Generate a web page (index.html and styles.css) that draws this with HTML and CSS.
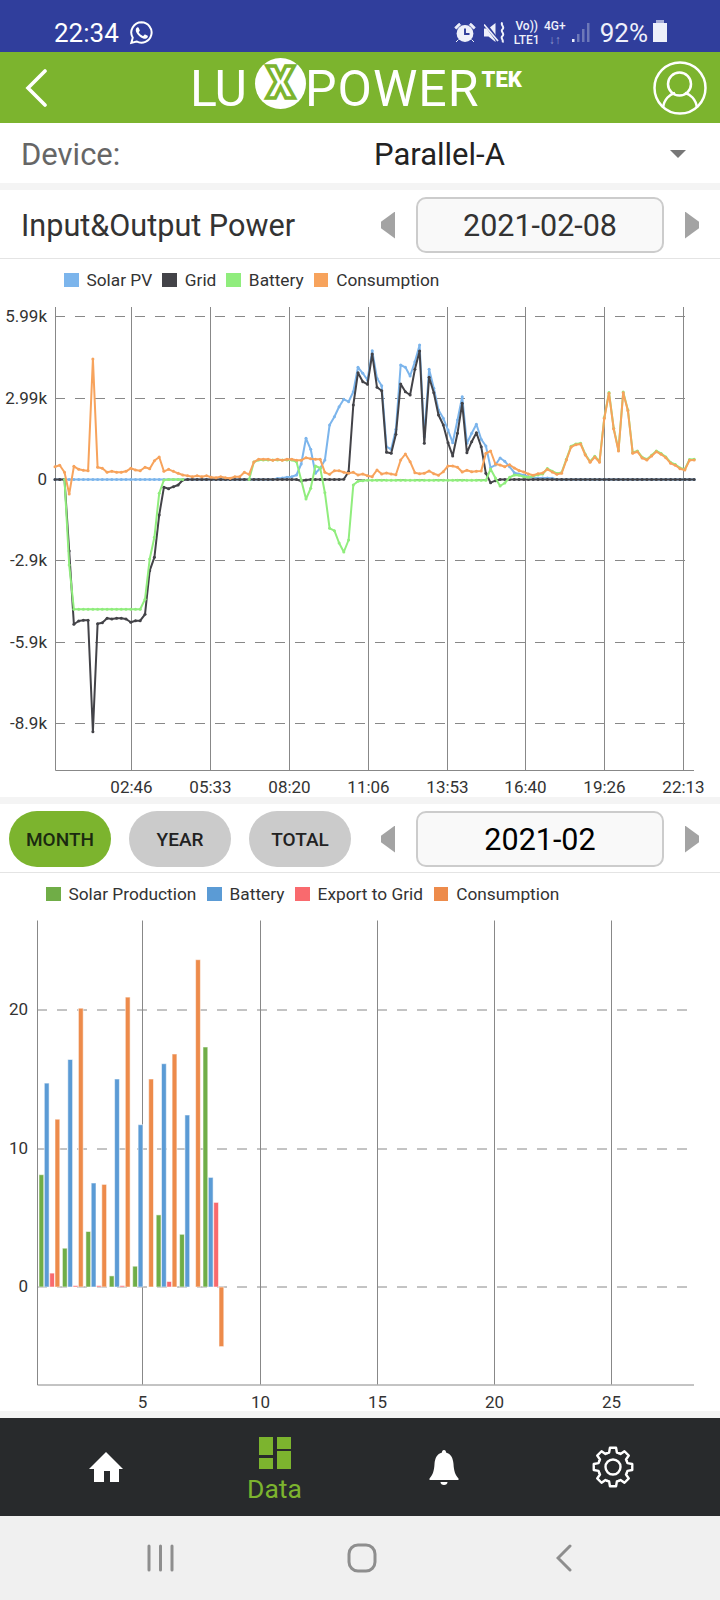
FILE: index.html
```html
<!DOCTYPE html>
<html lang="en">
<head>
    <meta charset="UTF-8">
    <meta name="viewport" content="width=device-width, initial-scale=1.0">
    <title>LuxPower Data</title>
    <link rel="stylesheet" href="styles.css">
</head>
<body>
    <div class="statusbar">
        <span class="clock">22:34</span>
        <svg class="icon-whatsapp" viewBox="0 0 24 24">
            <path d="M12 2.2a9.8 9.8 0 0 0-8.4 14.8L2.2 22l5-1.4A9.8 9.8 0 1 0 12 2.2z" fill="none" stroke="#fff" stroke-width="1.9"/>
            <path d="M8.5 7c-.3 0-.7.1-1 .5-.4.4-1 1-1 2.4s1 2.8 1.2 3c.1.2 2 3.1 4.9 4.3 2.4 1 2.9.8 3.4.7.5 0 1.7-.7 1.9-1.3.2-.7.2-1.2.2-1.3-.1-.2-.3-.2-.6-.4l-2-1c-.3-.1-.5-.1-.7.2l-.9 1.1c-.2.2-.3.2-.6.1-.3-.2-1.2-.5-2.3-1.4-.8-.8-1.4-1.7-1.6-2-.1-.3 0-.4.2-.6l.4-.5.3-.5v-.5l-.9-2.2c-.2-.6-.5-.5-.7-.5z" fill="#fff"/>
        </svg>
        <div class="status-right">
            <svg class="icon-alarm" viewBox="0 0 22 21">
                <circle cx="11" cy="11.500" r="8.400" fill="#eef0fa"/>
                <path d="M11 6.500v5.500h4.500" fill="none" stroke="#303e9c" stroke-width="1.900"/>
                <path d="M.8 5.500 5 1.300l1.600 1.500-4.200 4.200zM21.200 5.500 17 1.300l-1.600 1.500 4.200 4.200zM4.500 17.500l-2.500 2.500M17.500 17.500l2.500 2.500" fill="#eef0fa" stroke="#eef0fa"/>
            </svg>
            <svg class="icon-mute" viewBox="0 0 22 21">
                <path d="M0 6.500h4.500L11.500 1v19l-7-5.500H0z" fill="#eef0fa"/>
                <path d="M1 1.500 14 19" stroke="#303e9c" stroke-width="3.400"/>
                <path d="M0 2.500l14 16.500" stroke="#eef0fa" stroke-width="1.700"/>
                <path d="M18.500 .5c-2.800 2.200 2.800 4.300 0 6.700s2.800 4.300 0 6.700 1.700 3.700 0 6.500" fill="none" stroke="#eef0fa" stroke-width="2"/>
            </svg>
            <div class="net-stack volte"><span>Vo))</span><span>LTE1</span></div>
            <div class="net-stack g4"><span>4G+</span><span class="arrows">↓↑</span></div>
            <svg class="icon-signal" viewBox="0 0 18 20">
                <rect x="0" y="16" width="2.500" height="3" fill="#eef0fa"/>
                <rect x="5" y="11" width="2.500" height="8" fill="#6d78b8"/>
                <rect x="10" y="6" width="2.500" height="13" fill="#6d78b8"/>
                <rect x="15" y="0" width="2.500" height="19" fill="#6d78b8"/>
            </svg>
            <span class="battery-text">92%</span>
            <span class="battery"></span>
        </div>
    </div>

    <div class="topbar">
        <svg class="icon-back" viewBox="0 0 22 38">
            <path d="M20 2 3 19l17 17" fill="none" stroke="#fff" stroke-width="3.600" stroke-linecap="round"/>
        </svg>
        <div class="logo">
            <span class="logo-lu">LU</span>
            <span class="logo-x">X</span>
            <span class="logo-power">POWER</span>
            <span class="logo-tek">TEK</span>
        </div>
        <svg class="icon-profile" viewBox="0 0 54 54">
            <circle cx="27" cy="27" r="25.500" fill="none" stroke="#fff" stroke-width="2.500"/>
            <circle cx="26.500" cy="23" r="11.500" fill="none" stroke="#fff" stroke-width="2.500"/>
            <path d="M10 47c1-9 7-14 12-15M44 47c-1-9-7-14-12-15" fill="none" stroke="#fff" stroke-width="2.500"/>
        </svg>
    </div>

    <div class="device-row">
        <span class="device-label">Device:</span>
        <span class="device-name">Parallel-A</span>
        <span class="dropdown-arrow"></span>
    </div>

    <div class="panel-head power-head">
        <h2 class="panel-title">Input&amp;Output Power</h2>
        <div class="date-nav">
            <span class="tri tri-prev"></span>
            <div class="date-box">2021-02-08</div>
            <span class="tri tri-next"></span>
        </div>
    </div>

    <div class="chart-panel">
        <div class="legend legend-power">
            <span class="legend-item"><i class="swatch" style="background:#7cb5ec"></i>Solar PV</span>
            <span class="legend-item"><i class="swatch" style="background:#434348"></i>Grid</span>
            <span class="legend-item"><i class="swatch" style="background:#90ed7d"></i>Battery</span>
            <span class="legend-item"><i class="swatch" style="background:#f7a35c"></i>Consumption</span>
        </div>
        <svg id="powerChart" class="chart" viewBox="0 300 720 497"></svg>
    </div>

    <div class="panel-head range-head">
        <div class="range-tabs">
            <button class="pill active">MONTH</button>
            <button class="pill">YEAR</button>
            <button class="pill">TOTAL</button>
        </div>
        <div class="date-nav">
            <span class="tri tri-prev"></span>
            <div class="date-box month-box">2021-02</div>
            <span class="tri tri-next"></span>
        </div>
    </div>

    <div class="chart-panel">
        <div class="legend legend-energy">
            <span class="legend-item"><i class="swatch" style="background:#70ad47"></i>Solar Production</span>
            <span class="legend-item"><i class="swatch" style="background:#5b9bd5"></i>Battery</span>
            <span class="legend-item"><i class="swatch" style="background:#f96a6e"></i>Export to Grid</span>
            <span class="legend-item"><i class="swatch" style="background:#ed8b4b"></i>Consumption</span>
        </div>
        <svg id="energyChart" class="chart" viewBox="0 915 720 496"></svg>
    </div>

    <div class="tabbar">
        <div class="tab">
            <svg class="icon-home" viewBox="0 0 34 30">
                <path d="M17 0 34 17h-4v13h-9V19h-6v11H5V17H0z" fill="#fff"/>
            </svg>
        </div>
        <div class="tab tab-data">
            <svg class="icon-data" viewBox="0 0 32 32">
                <path d="M0 0h14v18H0zM18 0h14v12H18zM18 14h14v18H18zM0 21h14v11H0z" fill="#7cb42e"/>
            </svg>
            <span class="tab-label">Data</span>
        </div>
        <div class="tab">
            <svg class="icon-bell" viewBox="0 0 30 35">
                <path d="M15 0c1.500 0 2 1 2 2.500C22 4 24 8 24.500 14c.3 6 1.500 11 5 14.500V30H.5v-1.500C4 25 5.200 20 5.500 14 6 8 8 4 13 2.500 13 1 13.500 0 15 0z" fill="#fff"/>
                <path d="M11.500 32h7c0 2-1.500 3-3.500 3s-3.500-1-3.500-3z" fill="#fff"/>
            </svg>
        </div>
        <div class="tab">
            <svg class="icon-gear" viewBox="0 0 44 42">
                <g transform="translate(22 21)" fill="none" stroke="#fff" stroke-width="2.400" stroke-linecap="round" stroke-linejoin="round">
                    <circle r="7.500"/>
                    <path id="gearTooth" d="M-5.740-13.860-3.880-14.490-3.050-19.260H3.050L3.880-14.490 5.740-13.860"/>
                    <use href="#gearTooth" transform="rotate(45)"/>
                    <use href="#gearTooth" transform="rotate(90)"/>
                    <use href="#gearTooth" transform="rotate(135)"/>
                    <use href="#gearTooth" transform="rotate(180)"/>
                    <use href="#gearTooth" transform="rotate(225)"/>
                    <use href="#gearTooth" transform="rotate(270)"/>
                    <use href="#gearTooth" transform="rotate(315)"/>
                </g>
            </svg>
        </div>
    </div>

    <div class="navbar">
        <div class="nav-btn">
            <svg class="nav-recent" viewBox="0 0 27 28">
                <path d="M2 2v24M13.500 2v24M25 2v24" stroke="#8e8e8e" stroke-width="3" stroke-linecap="round"/>
            </svg>
        </div>
        <div class="nav-btn">
            <svg class="nav-home" viewBox="0 0 30 30">
                <rect x="2" y="2" width="26" height="26" rx="9" fill="none" stroke="#8e8e8e" stroke-width="3"/>
            </svg>
        </div>
        <div class="nav-btn">
            <svg class="nav-back" viewBox="0 0 16 28">
                <path d="M14 2 2 14l12 12" fill="none" stroke="#8e8e8e" stroke-width="3" stroke-linecap="round"/>
            </svg>
        </div>
    </div>

    <script src="charts.js"></script>
</body>
</html>
```

FILE: styles.css
```css
* {
    box-sizing: border-box;
}
body {
    font-family: Roboto, Arial, sans-serif;
    background-color: #f4f4f4;
    margin: 0;
    padding: 0;
    width: 720px;
    height: 1600px;
    overflow: hidden;
    color: #333;
}
svg {
    display: block;
    flex: none;
}

/* status bar */
.statusbar {
    height: 52px;
    background-color: #303e9c;
    color: #eef0fa;
    display: flex;
    align-items: center;
    padding: 13px 0 0 54px;
}
.clock {
    font-size: 26px;
    color: #fff;
}
.icon-whatsapp {
    width: 25px;
    height: 25px;
    margin-left: 10px;
}
.status-right {
    margin-left: auto;
    display: flex;
    align-items: center;
    padding-right: 53px;
}
.icon-alarm {
    width: 22px;
    height: 21px;
}
.icon-mute {
    width: 22px;
    height: 21px;
    margin-left: 8px;
}
.net-stack {
    display: flex;
    flex-direction: column;
    align-items: center;
    font-size: 12px;
    font-weight: 500;
    line-height: 14px;
}
.volte {
    margin-left: 8px;
    width: 26px;
}
.g4 {
    margin-left: 5px;
    width: 20px;
}
.arrows {
    color: #8f98cc;
}
.icon-signal {
    width: 18px;
    height: 20px;
    margin-left: 7px;
}
.battery-text {
    font-size: 26px;
    margin-left: 10px;
}
.battery {
    width: 14px;
    height: 19px;
    margin-left: 5px;
    background-color: #eef0fa;
    position: relative;
}
.battery::before {
    content: "";
    position: absolute;
    left: 3px;
    top: -3px;
    width: 8px;
    height: 3px;
    background-color: #a9afd8;
}

/* green header */
.topbar {
    height: 71px;
    background-color: #7cb42e;
    display: flex;
    align-items: center;
}
.icon-back {
    width: 22px;
    height: 38px;
    margin-left: 25px;
}
.logo {
    display: flex;
    align-items: center;
    margin-left: 143px;
    margin-top: 2px;
    color: #fff;
    font-weight: 400;
    font-size: 50px;
    line-height: 1;
}
.logo-lu {
    letter-spacing: -1px;
    width: 65px;
}
.logo-x {
    width: 51px;
    height: 51px;
    border-radius: 50%;
    background-color: #fff;
    color: #fff;
    -webkit-text-stroke: 3.500px #7cb42e;
    font-size: 44px;
    font-weight: 900;
    text-align: center;
    line-height: 51px;
    margin-bottom: 10px;
}
.logo-power {
    margin-left: -1px;
    letter-spacing: 1px;
}
.logo-tek {
    font-size: 22px;
    font-weight: 900;
    margin: 0 0 17px 2px;
}
.icon-profile {
    width: 54px;
    height: 54px;
    margin-left: auto;
    margin-right: 13px;
}

/* device row */
.device-row {
    height: 60px;
    background-color: #fff;
    display: flex;
    align-items: center;
    font-size: 31px;
    margin-bottom: 7px;
    padding-top: 2px;
}
.device-label {
    width: 374px;
    padding-left: 21px;
    color: #666;
}
.device-name {
    color: #222;
}
.dropdown-arrow {
    margin-left: auto;
    margin-right: 34px;
    border-left: 8.500px solid transparent;
    border-right: 8.500px solid transparent;
    border-top: 8px solid #777;
}

/* heads with date pickers */
.panel-head {
    height: 69px;
    background-color: #fff;
    display: flex;
    align-items: center;
    border-bottom: 1px solid #e4e4e4;
    padding-top: 2px;
}
.power-head {
    padding-left: 21px;
}
.range-head {
    padding-left: 9px;
}
.panel-title {
    margin: 1px 0 0;
    font-size: 30.600px;
    font-weight: 400;
    color: #333;
}
.date-nav {
    margin-left: auto;
    display: flex;
    align-items: center;
    gap: 21px;
    padding-right: 21px;
}
.date-box {
    width: 248px;
    height: 56px;
    background-color: #f9f9f9;
    border: 2px solid #ccc;
    border-radius: 10px;
    display: flex;
    align-items: center;
    justify-content: center;
    font-size: 30.500px;
    color: #333;
}
.month-box {
    color: #000;
}
.tri {
    width: 14px;
    height: 27px;
    background-color: #a3a3a3;
}
.tri-prev {
    clip-path: polygon(0 38%, 100% 0, 100% 100%, 0 62%);
}
.tri-next {
    clip-path: polygon(0 0, 100% 38%, 100% 62%, 0 100%);
}
.range-tabs {
    display: flex;
    gap: 18px;
}
.pill {
    width: 102px;
    height: 56px;
    border: none;
    border-radius: 28px;
    background-color: #cbcbcb;
    color: #222;
    font-family: inherit;
    font-size: 19px;
    font-weight: 500;
    padding: 0;
}
.pill.active {
    background-color: #7cb42e;
    color: #1b2a10;
}

/* charts */
.chart-panel {
    height: 538px;
    background-color: #fff;
    margin-bottom: 7px;
}
.legend {
    display: flex;
    height: 41px;
    font-size: 17.300px;
    color: #333;
    align-items: center;
}
.legend-power {
    padding-left: 64px;
    gap: 10px;
}
.legend-energy {
    padding-left: 46px;
    gap: 10.700px;
    height: 42px;
}
.legend-item {
    display: flex;
    align-items: center;
    gap: 8px;
}
.swatch {
    width: 14.500px;
    height: 14px;
}
.chart {
    width: 720px;
    height: 497px;
}
.grid-line {
    stroke: #888;
    stroke-width: 1;
    fill: none;
}
.grid-dash {
    stroke: #888;
    stroke-width: 1;
    stroke-dasharray: 10 10;
}
.tick {
    font-size: 17px;
    fill: #333;
}
.series {
    fill: none;
    stroke-width: 2;
    stroke-linejoin: round;
}
.bar {
    stroke: rgba(255, 255, 255, 0.55);
    stroke-width: 1;
}

/* bottom tabs */
.tabbar {
    height: 98px;
    background-color: #282a2c;
    display: flex;
    padding: 0 21px;
}
.tab {
    width: 169px;
    display: flex;
    flex-direction: column;
    align-items: center;
    justify-content: center;
}
.tab-data {
    justify-content: flex-start;
    padding-top: 19px;
}
.tab-label {
    color: #7cb42e;
    font-size: 26.500px;
    line-height: 30px;
    margin-top: 5px;
}
.icon-home {
    width: 34px;
    height: 30px;
}
.icon-data {
    width: 32px;
    height: 32px;
}
.icon-bell {
    width: 30px;
    height: 35px;
}
.icon-gear {
    width: 44px;
    height: 42px;
}

/* android nav */
.navbar {
    height: 84px;
    background-color: #f0f0f0;
    display: flex;
    align-items: center;
    padding-left: 60px;
}
.nav-btn {
    width: 201.500px;
    display: flex;
    justify-content: center;
}
.nav-recent {
    width: 27px;
    height: 28px;
}
.nav-home {
    width: 30px;
    height: 30px;
}
.nav-back {
    width: 16px;
    height: 28px;
}
```

FILE: charts.js
```js
// pixel y of each 10 minute sample, x is worked out from the index
var STEP = 4.735;
var LEFT = 55;
var ZERO = 479.5;

function fill(n, v) {
    var a = [];
    for (var i = 0; i < n; i++) a.push(v);
    return a;
}
function flat(n) {
    return fill(n, ZERO);
}

var consumption = [466.7, 465.3, 472.3, 494, 466.3, 469.3, 470.3, 470.7, 359, 467.3, 468.3, 472.3, 471.3, 472.3, 472.3, 471.3,
    468.3, 470, 470.7, 467.3, 468.7, 460.7, 457, 471.3, 469.3, 471.3, 473.3, 475, 475.7, 476.7, 475.7, 476.7, 475.7, 477.3,
    477.7, 476.7, 477.7, 478.3, 476.7, 476.7, 472.3, 474.3, 462, 459.3, 459.3, 459.3, 460.3, 459.3, 460.3, 459.3, 459.3,
    460.3, 460.3, 457.7, 458.7, 459.3, 459.3, 472.3, 474.3, 470.7, 470.7, 472.3, 473.3, 472.3,
    475, 474, 475.7, 476.7, 470, 474, 473, 474, 474.7, 460, 454, 461.7, 472.7, 473.7, 473.3, 471, 473.7, 475.3, 471.7, 466,
    466, 467.3, 472, 470.3, 471.7, 471.3, 471, 453.3, 451, 464, 465, 466.7, 464.7, 468, 470.5,
    472, 474, 475.3, 473.7, 473, 469.3, 472, 474.3, 473.3, 460, 447, 444.7, 444, 455, 462.3, 457, 462.3, 418.3, 393.3, 429,
    451, 392.7, 410.7, 453.3, 451.7, 458, 460, 456, 451.7, 454.3, 457.7, 463.3, 465.3, 468.7, 470, 460.3, 460];

var solar = flat(47).concat([478.5, 478, 477.3, 476.7, 475, 464, 438.3, 449.3, 473.3, 468.3, 460, 425, 416.7, 406.7, 399.3,
    401.7, 391.7, 367.3, 373.3, 380, 350.7, 378.3, 385.7, 446.7, 449.3, 429.3, 365, 367.3, 376, 361.7, 345, 436.7, 369.3,
    388.3, 410, 418.3, 430, 442.7, 420, 396.7, 443.3, 433.3, 424.3, 439.3, 446, 467.7, 465, 458, 461.3, 466.7, 472.7, 474,
    475.3, 476.7, 477.7, 478, 478, 478, 478.3]).concat(flat(30));

var grid = [ZERO, ZERO, ZERO, 551, 624.3, 621, 620.3, 620.3, 731.7, 623.7, 622.7, 618.3, 619, 618.3, 618.3, 619, 622.3, 620.7,
    620.7, 614.3, 570.7, 557.3, 515, 487.3, 488.7, 486.7, 485, 480].concat(flat(24), [481, 480], flat(7), [479.3, 471.7, 405,
    372.7, 381.7, 384.3, 354, 387.3, 390.7, 452.3, 453.3, 434.3, 384, 391.7, 395, 369.3, 351, 443.3, 377.3, 392.7, 415, 425,
    442.7, 456, 433.3, 403.3, 452.7, 441.7, 432.7, 446.7, 473.3, 482.7, 480.7], flat(42));

// null = no sample drawn, the grid line shows on the zero line there
var battery = [null, null, ZERO, 565].concat(fill(15, 609.3), [599.3, 559, 537.3, 493.3, 480], flat(4), fill(13, null), [ZERO, 462],
    fill(8, 460), [461.7, 480, 499, 488.3, 466, 468, 492.7, 528.3, 530.7, 543, 552, 540, 485, 481.3, 480.7], fill(26, ZERO + 0.8),
    [469, 478, 486, 483, 477.3, 475, 475.3, 476.7, 477.3, 476, 474.7, 474], consumption.slice(104).map(function (y) { return y - 0.8; }));

var powerSeries = [
    { data: solar, color: '#7cb5ec' },
    { data: grid, color: '#434348' },
    { data: battery, color: '#90ed7d' },
    { data: consumption, color: '#f7a35c' }
];

function xAt(i) {
    return (LEFT + STEP * i).toFixed(1);
}

function drawSeries(s) {
    var html = '';
    var pts = [];
    s.data.forEach(function (y, i) {
        if (y === null) {
            if (pts.length) html += `<polyline class="series" stroke="${s.color}" points="${pts.join(' ')}"/>`;
            pts = [];
            return;
        }
        pts.push(xAt(i) + ',' + y);
        html += `<circle cx="${xAt(i)}" cy="${y}" r="1.5" fill="${s.color}"/>`;
    });
    if (pts.length) html += `<polyline class="series" stroke="${s.color}" points="${pts.join(' ')}"/>`;
    return html;
}

function drawPowerChart() {
    var html = '';
    [131.5, 210.5, 289.5, 368.5, 447.5, 525.5, 604.5, 683.5].forEach(function (x, i) {
        var labels = ['02:46', '05:33', '08:20', '11:06', '13:53', '16:40', '19:26', '22:13'];
        html += `<line class="grid-line" x1="${x}" x2="${x}" y1="307" y2="770"/>`;
        html += `<text class="tick" x="${x}" y="793" text-anchor="middle">${labels[i]}</text>`;
    });
    [[316.5, '5.99k'], [398.5, '2.99k'], [479.5, '0'], [560.5, '-2.9k'], [642.5, '-5.9k'], [723.5, '-8.9k']].forEach(function (t) {
        html += `<line class="grid-dash" x1="55" x2="685" y1="${t[0]}" y2="${t[0]}"/>`;
        html += `<text class="tick" x="47" y="${t[0] + 5}" text-anchor="end">${t[1]}</text>`;
    });
    html += '<path class="grid-line" d="M55.500 307V770.500H694"/>';
    powerSeries.forEach(function (s) {
        html += drawSeries(s);
    });
    document.getElementById('powerChart').innerHTML = html;
}

// kWh per day: solar, battery, export, consumption
var days = [
    [8.1, 14.7, 1.0, 12.1],
    [2.8, 16.4, 0.1, 20.1],
    [4.0, 7.5, 0.1, 7.4],
    [0.8, 15.0, 0.1, 20.9],
    [1.5, 11.7, 0, 15.0],
    [5.2, 16.1, 0.4, 16.8],
    [3.8, 12.4, 0, 23.6],
    [17.3, 7.9, 6.1, -4.3]
];
var barColors = ['#70ad47', '#5b9bd5', '#f96a6e', '#ed8b4b'];

function drawEnergyChart() {
    var html = '';
    var y0 = 1286.5;
    var unit = 13.87;
    [[142.5, '5'], [260.5, '10'], [377.5, '15'], [494.5, '20'], [611.5, '25']].forEach(function (t) {
        html += `<line class="grid-line" x1="${t[0]}" x2="${t[0]}" y1="920" y2="1384"/>`;
        html += `<text class="tick" x="${t[0]}" y="1407" text-anchor="middle">${t[1]}</text>`;
    });
    [[1009.5, '20'], [1148.5, '10'], [1286.5, '0']].forEach(function (t) {
        html += `<line class="grid-dash" x1="37" x2="694" y1="${t[0]}" y2="${t[0]}"/>`;
        html += `<text class="tick" x="28" y="${t[0] + 5}" text-anchor="end">${t[1]}</text>`;
    });
    html += '<path class="grid-line" d="M37.500 920V1384.500H694"/>';

    days.forEach(function (day, d) {
        day.forEach(function (v, b) {
            if (v === 0) return;
            var h = Math.abs(v) * unit;
            var x = 39 + 23.43 * d + 5.33 * b;
            var y = v > 0 ? y0 - h : y0;
            html += `<rect class="bar" fill="${barColors[b]}" x="${x.toFixed(1)}" y="${y.toFixed(1)}" width="4.8" height="${h.toFixed(1)}"/>`;
        });
    });
    document.getElementById('energyChart').innerHTML = html;
}

drawPowerChart();
drawEnergyChart();
```
